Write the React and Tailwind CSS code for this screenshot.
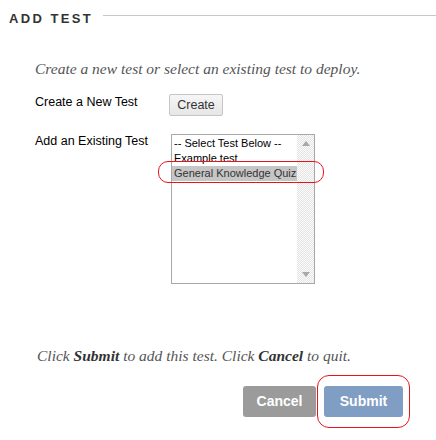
export default function App() {
  return (
    <div className="relative w-[436px] h-[440px] bg-white overflow-hidden font-['Liberation_Sans',Arial,sans-serif]">
      {/* header */}
      <div className="flex items-start pt-[12px] pl-[9px]">
        <h2 className="text-[13px] leading-[14px] font-bold tracking-[2.4px] text-[#333]">ADD TEST</h2>
        <div className="flex-1 h-px bg-[#c8c8c8] mt-[3px] ml-[10px]" />
      </div>

      <div className="pl-[35px]">
        <p className="mt-[33px] text-[15.5px] leading-[19px] italic text-[#555] font-['Liberation_Serif',Georgia,serif] whitespace-nowrap">
          Create a new test or select an existing test to deploy.
        </p>

        <div className="flex items-start mt-[16px]">
          <span className="w-[134px] text-[12.5px] leading-4 text-black">Create a New Test</span>
          <button className="w-[54px] h-[22px] rounded-[2px] border border-[#c6c6c6] bg-gradient-to-b from-[#f6f6f6] to-[#e6e6e6] text-[12.5px] text-[#333]">
            Create
          </button>
        </div>

        <div className="flex items-start mt-[18px]">
          <span className="w-[136px] text-[12.5px] leading-4 text-black -mt-[1px]">Add an Existing Test</span>
          <div className="flex w-[144px] h-[150px] border border-[#a8a8a8] bg-white">
            <div className="flex-1 flex flex-col pt-[1px] text-[11px] leading-[15px] text-black whitespace-nowrap">
              <div className="pl-[2px] h-[15px]">-- Select Test Below --</div>
              <div className="pl-[2px] h-[15px]">Example test</div>
              <div className="pl-[2px] h-[15px] bg-[#c6c6c6] text-[#333]">General Knowledge Quiz</div>
            </div>
            <div className="w-[17px] flex flex-col justify-between items-center py-[6px] bg-[#f1f1f1] bg-[repeating-conic-gradient(#e4e4e4_0_25%,#fbfbfb_0_50%)] bg-[length:2px_2px]">
              <svg width="8" height="5" viewBox="0 0 8 5"><path d="M0 5 L4 0 L8 5Z" fill="#a8a8a8" /></svg>
              <svg width="8" height="5" viewBox="0 0 8 5"><path d="M0 0 L4 5 L8 0Z" fill="#a8a8a8" /></svg>
            </div>
          </div>
        </div>

        <p className="mt-[62px] ml-[2px] text-[15.5px] leading-[19px] italic text-[#555] font-['Liberation_Serif',Georgia,serif] whitespace-nowrap">
          Click <b className="text-[#333]">Submit</b> to add this test. Click <b className="text-[#333]">Cancel</b> to quit.
        </p>
      </div>

      <div className="flex justify-end gap-[8px] mt-[21px] pr-[33px]">
        <button className="w-[73px] h-[31px] rounded-[3px] bg-[#9b9b9b] text-white text-[14px] font-bold">Cancel</button>
        <button className="w-[79px] h-[31px] rounded-[3px] bg-[#809dc4] text-white text-[14px] font-bold">Submit</button>
      </div>

      {/* red annotation outlines */}
      <div className="absolute left-[158px] top-[161px] w-[166px] h-[22px] border border-[#e8141c] rounded-[10px]" />
      <div className="absolute left-[317px] top-[375px] w-[93px] h-[53px] border border-[#e8141c] rounded-[12px]" />
    </div>
  );
}
